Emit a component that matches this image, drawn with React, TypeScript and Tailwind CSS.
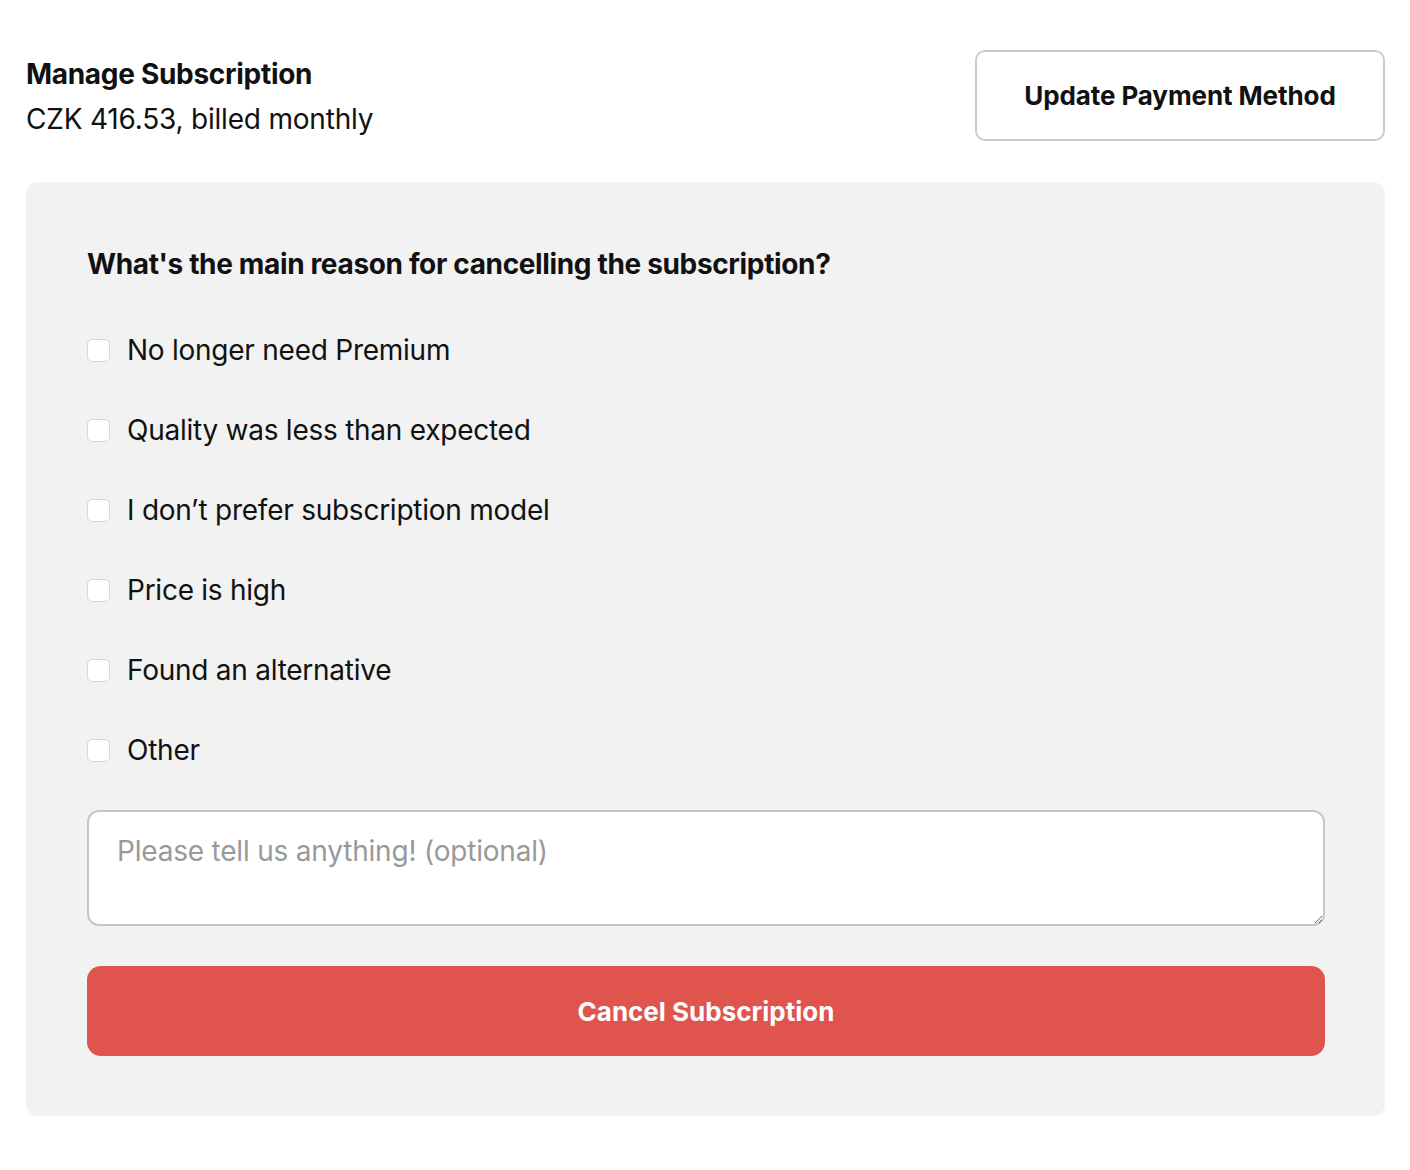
import { useState } from 'react';

const reasons = [
  'No longer need Premium',
  'Quality was less than expected',
  'I don’t prefer subscription model',
  'Price is high',
  'Found an alternative',
  'Other',
];

export default function App() {
  const [checked, setChecked] = useState<Record<string, boolean>>({});

  return (
    <div className="min-h-screen bg-white pl-[26px] pr-[25px] pt-[50px] text-[#111] [font-family:Inter,'Noto_Sans',sans-serif]">
      {/* Header */}
      <div className="flex items-start justify-between">
        <div className="pt-[7px]">
          <h2 className="text-[28px] font-bold leading-[34px] tracking-[-0.3px]">Manage Subscription</h2>
          <p className="mt-[8px] text-[28px] leading-[40px] tracking-[-0.2px]">CZK 416.53, billed monthly</p>
        </div>
        <button className="h-[91px] w-[410px] rounded-[10px] border-2 border-[#cbcbcb] bg-white text-[26px] font-bold tracking-[-0.1px]">
          Update Payment Method
        </button>
      </div>

      {/* Cancel form */}
      <div className="mt-[41px] rounded-[12px] bg-[#f2f2f2] pb-[60px] pl-[61px] pr-[60px] pt-[62px]">
        <h3 className="text-[28px] font-bold leading-[40px] tracking-[-0.35px]">
          What's the main reason for cancelling the subscription?
        </h3>
        <div className="mt-[26px] flex flex-col">
          {reasons.map((r) => (
            <label key={r} className="flex h-[80px] cursor-pointer items-center gap-[17px]">
              <input
                type="checkbox"
                checked={!!checked[r]}
                onChange={() => setChecked({ ...checked, [r]: !checked[r] })}
                className="h-[23px] w-[23px] appearance-none rounded-[5px] border border-[#d6d6d6] bg-white checked:bg-[#e0544e]"
              />
              <span className="text-[28px] tracking-[-0.25px]">{r}</span>
            </label>
          ))}
        </div>
        <textarea
          placeholder="Please tell us anything! (optional)"
          className="mt-[20px] block h-[116px] w-full rounded-[12px] border-2 border-[#c6c6c6] bg-white px-[28px] py-[19px] text-[28px] leading-[40px] tracking-[-0.2px] placeholder:text-[#999] focus:outline-none"
        />
        <button className="mt-[40px] h-[90px] w-full rounded-[14px] bg-[#e0544e] text-[26px] font-bold text-white">
          Cancel Subscription
        </button>
      </div>
    </div>
  );
}
